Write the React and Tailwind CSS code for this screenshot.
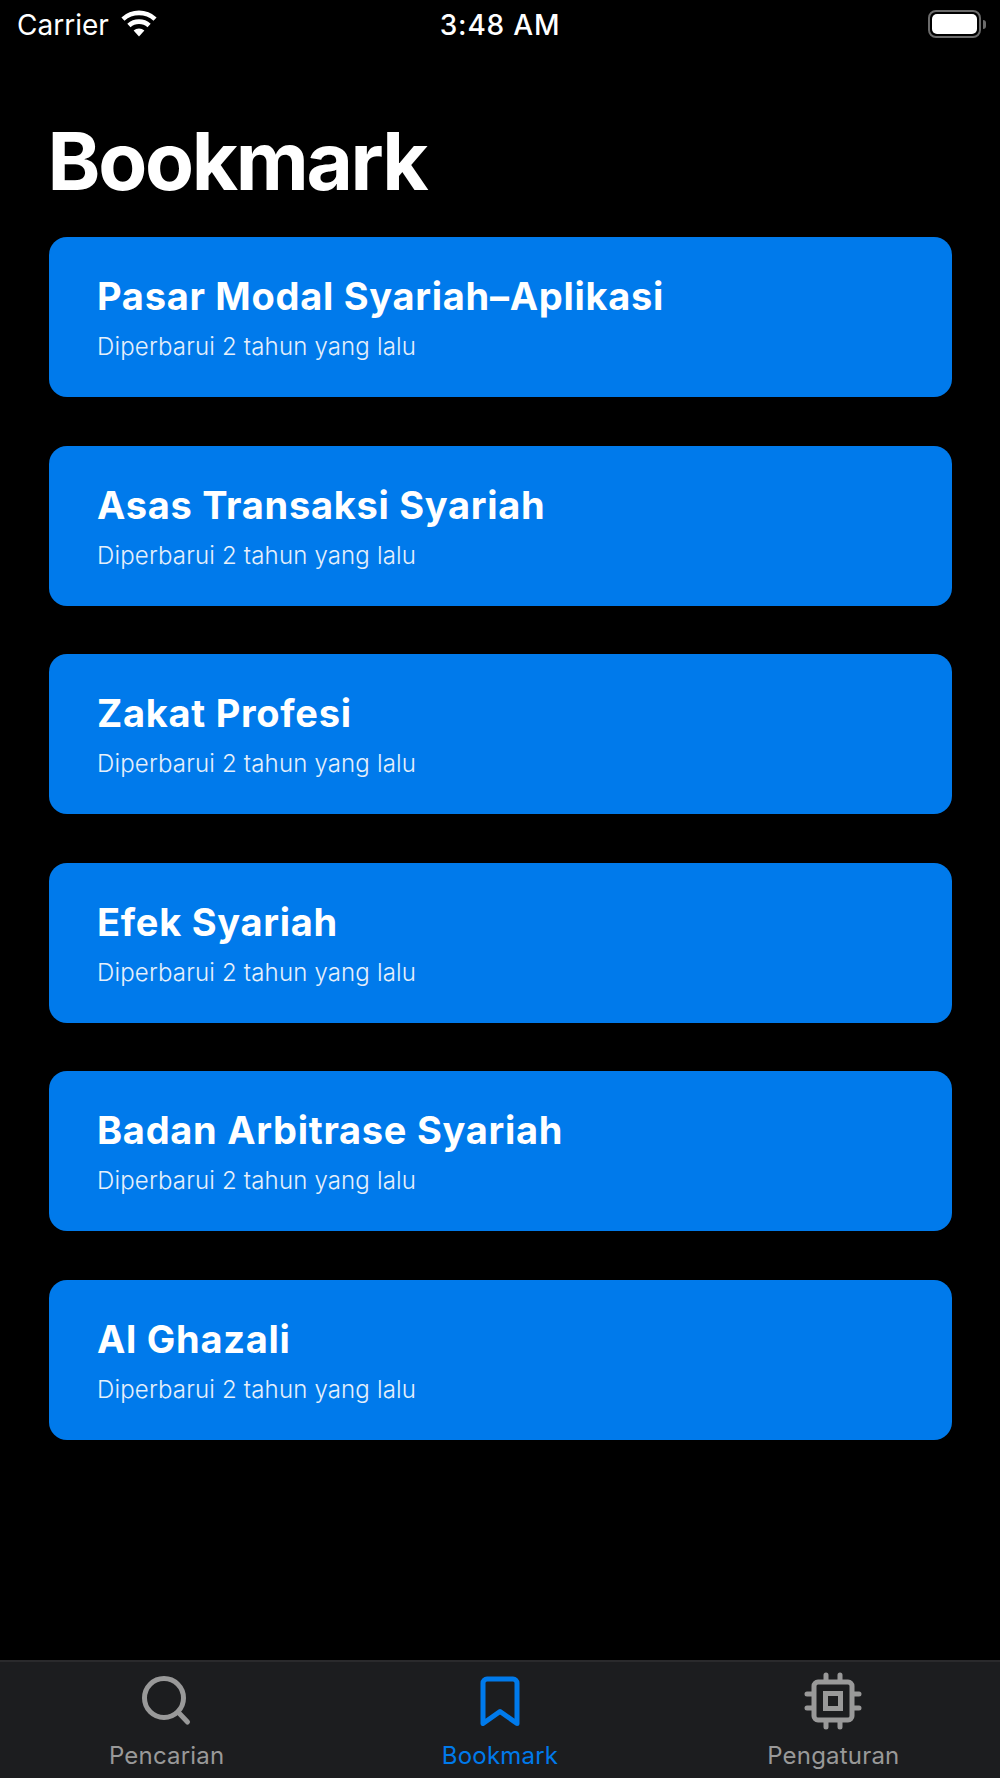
const font = { fontFamily: "Inter, sans-serif" };

const items = ["Pasar Modal Syariah–Aplikasi", "Asas Transaksi Syariah", "Zakat Profesi", "Efek Syariah", "Badan Arbitrase Syariah", "Al Ghazali"];

function Wifi() {
  return (
    <svg width="36" height="27" viewBox="0 0 36 27" className="absolute left-[121px] top-[10px]">
      <path fill="#fff" d="M18 26.5 12.6 20.6a8 8 0 0 1 10.8 0Z" />
      <path fill="#fff" d="M9.5 17.3 6.3 13.8a17.5 17.5 0 0 1 23.4 0l-3.2 3.5a12.7 12.7 0 0 0-17 0Z" />
      <path fill="#fff" d="M3.5 10.8 .4 7.4a26 26 0 0 1 35.2 0l-3.1 3.4a21.4 21.4 0 0 0-29 0Z" />
    </svg>
  );
}

function Battery() {
  return (
    <div className="absolute left-[928px] top-[10px] flex items-center">
      <div className="w-[53px] h-[28px] rounded-[8px] border-2 border-[#6b6b6b] p-[2px]">
        <div className="w-full h-full rounded-[5px] bg-white" />
      </div>
      <div className="ml-[2px] w-[3px] h-[9px] rounded-r-full bg-[#6b6b6b]" />
    </div>
  );
}

function Search() {
  return (
    <svg width="50" height="50" viewBox="0 0 50 50" fill="none" stroke="#999999" strokeWidth="5" strokeLinecap="round">
      <circle cx="22" cy="22" r="19.5" />
      <path d="M36 36 45.5 46" />
    </svg>
  );
}

function BookmarkIcon() {
  return (
    <svg width="40" height="50" viewBox="0 0 40 50" fill="none" stroke="#007aeb" strokeWidth="5" strokeLinejoin="round" strokeLinecap="round">
      <path d="M3 47.5V7a4 4 0 0 1 4-4h26a4 4 0 0 1 4 4v40.500L20 35.500Z" />
    </svg>
  );
}

function Chip() {
  return (
    <svg width="58" height="58" viewBox="0 0 58 58" fill="none" stroke="#999999" strokeWidth="5" strokeLinecap="round">
      <rect x="10" y="10" width="38" height="38" rx="4" />
      <rect x="21.500" y="21.500" width="15" height="15" strokeLinecap="butt" />
      <path d="M22 3v6M36 3v6M22 49v6M36 49v6M3 22h6M3 36h6M49 22h6M49 36h6" />
    </svg>
  );
}

function Tab({ icon, label, active }) {
  return (
    <div className="flex-1 flex flex-col items-center pt-[9px]">
      <div className="h-[60px] flex items-center justify-center">{icon}</div>
      <div className={`mt-[10px] text-[24px] leading-[29px] tracking-[0.2px] ${active ? "text-[#007aeb]" : "text-[#999999]"}`}>{label}</div>
    </div>
  );
}

export default function App() {
  return (
    <div className="relative w-[1000px] h-[1778px] bg-black text-white flex flex-col overflow-hidden" style={font}>
      <div className="relative h-[50px] shrink-0">
        <span className="absolute left-[17px] top-[8px] text-[28px] leading-[34px]">Carrier</span>
        <Wifi />
        <span className="absolute left-0 right-0 top-[8px] text-center text-[28px] leading-[34px] font-medium tracking-[0.8px]">3:48 AM</span>
        <Battery />
      </div>
      <div className="flex-1 px-[48.5px]">
        <h1 className="mt-[66px] -ml-[1px] h-[121px] text-[80px] leading-[90px] font-bold tracking-[-2.3px]">Bookmark</h1>
        <div className="flex flex-col gap-[48.6px]">
          {items.map((t) => (
            <div key={t} className="h-[160px] rounded-[18px] bg-[#007aeb] pl-[48.5px] pt-[36px]">
              <div className="text-[38px] leading-[46px] font-bold tracking-[0.72px]">{t}</div>
              <div className="mt-[13px] text-[24px] leading-[29px] font-light tracking-[0.17px] text-[#e6f0fb]">Diperbarui 2 tahun yang lalu</div>
            </div>
          ))}
        </div>
      </div>
      <div className="h-[118px] shrink-0 bg-[#1c1d1f] border-t-2 border-[#2a2a2c] flex px-[0px]">
        <Tab icon={<Search />} label="Pencarian" />
        <Tab icon={<BookmarkIcon />} label="Bookmark" active />
        <Tab icon={<Chip />} label="Pengaturan" />
      </div>
    </div>
  );
}
